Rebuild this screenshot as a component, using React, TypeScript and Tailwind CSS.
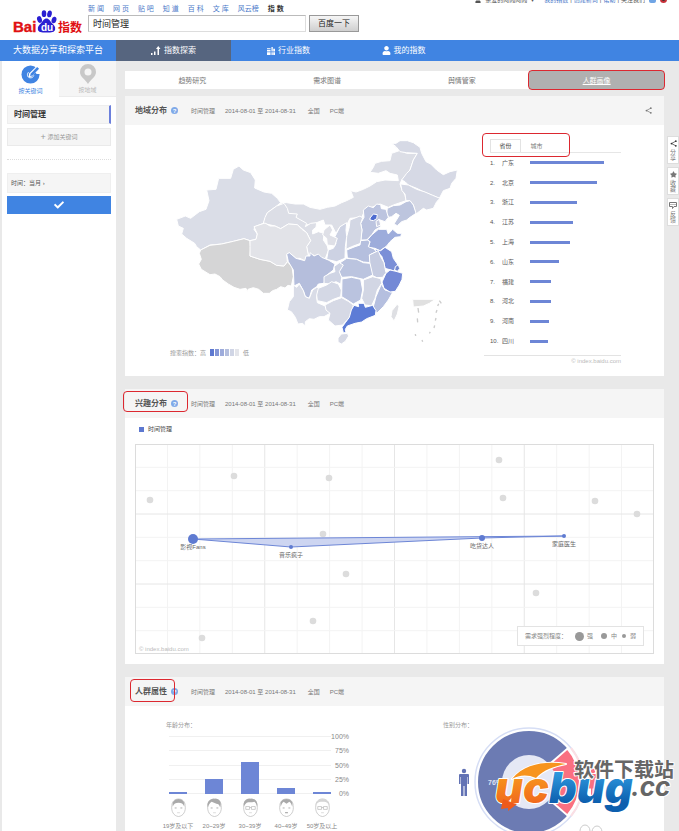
import { useState } from "react";
import clsx from "clsx";
import { FaCheck, FaStar, FaUser } from "react-icons/fa";

const searchLinks = ["新 闻", "网 页", "贴 吧", "知 道", "百 科", "文 库", "风云榜"];
const tabs = ["趋势研究", "需求图谱", "舆情管家", "人群画像"];

const provinces = [
  { name: "广东", value: 74 },
  { name: "北京", value: 67 },
  { name: "浙江", value: 47 },
  { name: "江苏", value: 43 },
  { name: "上海", value: 40 },
  { name: "山东", value: 29 },
  { name: "福建", value: 21 },
  { name: "河北", value: 21 },
  { name: "河南", value: 19 },
  { name: "四川", value: 18 },
];

const mapShapes = [
  // west and north
  { fill: "#dadde7", d: "M500,268 l26,-10 16,7 26,-20 20,-7 9,-26 -7,-32 28,-2 8,-33 36,0 8,-27 17,-10 13,12 22,8 14,22 -2,24 28,12 23,4 17,15 10,13 -12,10 -28,20 -12,32 -25,10 -3,8 10,14 -4,16 -18,4 -18,-6 -32,8 -35,8 -35,3 -28,15 -12,-10 -6,-10 -24,-15 -15,-13 5,-17 -15,-7Z", west: true },
  { fill: "#dcdee6", d: "M-88,218 L-70,218 -45,222 -20,222 0,232 30,238 52,232 75,228 95,218 110,212 130,202 122,182 138,186 160,178 180,168 200,155 225,150 265,152 262,135 240,130 228,122 205,130 180,127 190,112 195,100 215,94 240,92 245,70 268,62 262,50 245,42 270,62 290,70 322,70 310,90 298,125 275,150 270,162 276,180 285,195 288,212 250,225 235,232 210,222 165,240 155,262 120,265 110,285 90,290 78,310 65,285 45,285 40,270 15,280 -38,290Z" },
  { fill: "#dcdee6", d: "M-140,280 L-135,262 -128,248 -100,228 -78,220 -68,235 -64,250 -38,252 -42,262 -10,280 -14,290 2,280 20,278 18,292 8,300 8,312 25,305 42,310 40,330 52,348 55,362 45,388 30,392 10,375 -5,375 -10,350 2,332 -10,308 -38,284 -65,282 -88,296 -105,288Z" },
  { fill: "#d5d5d6", d: "M-328,360 L-300,346 -265,342 -230,334 -198,326 -180,332 -178,355 -180,378 -150,388 -120,394 -100,406 -78,408 -68,395 -54,410 -50,440 -56,468 -66,466 -75,474 -88,470 -100,478 -112,482 -122,490 -140,490 -154,478 -170,473 -186,478 -188,485 -192,475 -210,478 -228,472 -245,462 -262,450 -270,440 -285,432 -300,434 -326,418 -334,402 -326,388 -332,370Z" },
  { fill: "#e2e3e8", d: "M-168,290 L-150,284 -135,279 -120,288 -105,288 -88,296 -65,282 -38,284 -24,298 -10,308 2,332 -10,350 -5,375 -16,392 -30,385 -42,385 -62,368 -70,375 -68,395 -78,408 -100,406 -120,394 -150,388 -180,378 -180,350 -180,332 -162,328 -158,312Z" },
  { fill: "#b5bedc", d: "M-70,372 L-62,368 -42,385 -16,392 -12,378 0,378 0,368 12,378 25,372 35,382 55,390 75,402 70,420 50,436 42,460 25,462 20,470 5,480 -2,505 -14,500 -20,482 -32,460 -48,468 -50,420 -65,395Z" },
  { fill: "#d9dce7", d: "M-50,465 L-40,472 -32,462 -20,482 -14,500 -2,505 8,480 20,472 30,475 20,500 22,518 50,530 60,550 42,560 28,560 12,568 -2,566 -14,575 -14,588 -22,580 -36,582 -44,562 -56,545 -68,540 -62,515 -50,500Z" },
  // north-east
  { fill: "#d6d9e5", d: "M245,40 L258,40 270,32 292,32 310,38 330,52 335,70 348,95 362,102 380,120 400,134 420,125 442,120 438,145 425,160 420,175 400,182 388,205 365,195 340,185 320,175 295,165 285,155 275,150 290,130 300,120 310,90 322,70 290,68 270,65 258,50Z" },
  { fill: "#d6d9e5", d: "M272,162 L295,165 320,178 345,186 368,196 390,205 380,215 370,235 350,240 340,235 318,252 310,225 300,212 288,212 285,192 276,182Z" },
  { fill: "#bdc5de", d: "M232,235 L250,227 270,225 288,215 300,212 310,225 318,250 300,262 290,270 275,275 262,287 252,282 268,256 258,250 245,260 236,262 230,250Z" },
  { fill: "#bcc4df", d: "M160,240 L175,228 190,233 200,222 212,224 214,236 228,238 235,262 225,275 205,268 212,290 195,300 185,315 170,330 152,330 156,300 152,280 162,262Z" },
  { fill: "#c9cde0", d: "M198,274 L208,268 212,285 200,290Z" },
  { fill: "#4e6cd0", d: "M180,264 L190,252 202,254 200,266 190,272 180,270Z" },
  { fill: "#d3d7e4", d: "M120,270 L150,258 158,264 152,280 156,300 152,340 125,350 108,358 110,320 118,290Z" },
  { fill: "#cdd2e3", d: "M90,290 L110,278 108,300 110,320 106,350 105,385 80,395 50,388 55,360 70,355 78,340 72,325 80,310Z" },
  { fill: "#dfe0e7", d: "M42,300 L60,285 68,300 60,315 82,325 74,348 52,345 50,325 38,315Z" },
  // centre and coast
  { fill: "#9dacdb", d: "M185,315 L205,298 230,298 235,312 248,298 262,310 275,310 272,320 255,322 240,335 230,348 210,362 195,355 175,352 180,335 172,330Z" },
  { fill: "#b5bfde", d: "M110,360 L135,350 150,345 152,332 172,330 180,335 175,350 205,362 178,375 182,398 160,396 140,388 112,384Z" },
  { fill: "#7b8fd7", d: "M192,358 L212,362 225,352 245,365 250,385 262,402 265,412 250,422 225,415 222,398 215,378Z" },
  { fill: "#c6cce1", d: "M178,375 L205,362 212,380 222,398 225,415 228,428 218,442 200,443 185,435 180,410Z" },
  { fill: "#bbc4df", d: "M85,402 L110,385 140,388 160,398 180,400 188,435 160,448 125,440 98,442 82,430Z" },
  { fill: "#cfd4e4", d: "M42,440 L60,430 75,425 72,410 88,398 100,405 88,425 95,442 92,462 78,455 60,462 42,460Z" },
  { fill: "#d4d8e5", d: "M20,495 L25,475 50,465 65,455 85,462 94,480 92,500 70,508 50,518 22,512Z" },
  { fill: "#bac3df", d: "M96,447 L125,442 152,448 158,480 152,510 130,522 112,510 95,500Z" },
  { fill: "#d2d6e4", d: "M160,450 L188,440 212,446 215,460 202,480 195,505 185,527 165,525 155,505 160,480Z" },
  { fill: "#d6d9e5", d: "M45,525 L70,512 95,503 115,514 130,525 122,558 98,585 75,588 55,570 60,550 48,540Z" },
  { fill: "#b5bfdf", d: "M214,462 L225,480 248,487 235,510 220,530 200,550 190,530 198,500Z" },
  { fill: "#7489d6", d: "M228,430 L240,420 258,424 278,430 276,448 268,465 256,484 240,486 222,475 216,456Z" },
  { fill: "#7388cf", d: "M256,410 L265,404 269,416 262,424 254,420Z" },
  { fill: "#5d7cd6", d: "M144,520 L162,520 166,532 188,526 198,542 196,556 170,566 155,576 135,580 112,588 106,598 108,608 100,608 96,592 106,578 118,562 124,540 132,526 146,530Z" },
  { fill: "#d6d9e5", d: "M94,612 L112,610 116,618 106,634 94,642 84,636 84,624Z" },
  { fill: "#dedfe3", d: "M262,522 L267,530 262,552 252,573 243,560 246,542Z" },
  { fill: "#e0e0e0", d: "M308,508 L376,508 358,520 340,528 310,531Z" },
];

const greyDots = [
  [99, 32], [194, 34], [15, 56], [188, 90], [364, 16], [368, 54],
  [460, 57], [502, 70], [401, 149], [211, 130], [178, 177], [67, 194],
];

const interests = [
  { name: "影视Fans", x: 58, y: 95, r: 5 },
  { name: "音乐疯子", x: 156, y: 103, r: 2 },
  { name: "吃货达人", x: 347, y: 94, r: 3 },
  { name: "家庭医生", x: 429, y: 92, r: 2 },
];

const ages = [
  { label: "19岁及以下", height: 2 },
  { label: "20~29岁", height: 15 },
  { label: "30~39岁", height: 32 },
  { label: "40~49岁", height: 6 },
  { label: "50岁及以上", height: 2 },
];

const legendColors = ["bg-[#5d78d0]", "bg-[#8496d6]", "bg-[#9dabdb]", "bg-[#b5bfde]", "bg-[#d0d5e5]", "bg-[#e4e5ea]"];

function BaiduLogo() {
  return (
    <svg viewBox="0 0 72 26" className="w-[72px] h-[26px] shrink-0" aria-label="Baidu 指数">
      <g className="font-[family-name:'Liberation_Sans','Noto_Sans_CJK_SC',sans-serif] font-bold" fill="#e01012">
        <text x="1" y="23" fontSize="15" stroke="#e01012" strokeWidth=".4">Bai</text>
        <text x="46" y="23" fontSize="12">指数</text>
      </g>
      <g fill="#2a1fd2">
        <ellipse cx="27.500" cy="10.500" rx="2.400" ry="3.400" transform="rotate(-15 27.500 10.500)" />
        <ellipse cx="32" cy="4.700" rx="2.300" ry="3.400" />
        <ellipse cx="37.500" cy="4.900" rx="2.300" ry="3.400" transform="rotate(12 37.500 4.900)" />
        <ellipse cx="42" cy="11" rx="2.400" ry="3.300" transform="rotate(15 42 11)" />
        <path d="M34.500 9.500c2.600 0 3.600 2.700 5.300 4.500 2.200 2.200 3.900 3.700 3.300 6.400-.6 2.600-3.100 3.200-8.600 3.200s-8.100-.6-8.600-3.200c-.5-2.700 1.200-4.200 3.300-6.400 1.700-1.800 2.700-4.500 5.300-4.500z" />
      </g>
      <text x="29" y="21.500" fontSize="10" fontWeight="700" fill="#fff" fontFamily="Liberation Sans">du</text>
    </svg>
  );
}

function ShareIcon({ className }: { className?: string }) {
  return (
    <svg viewBox="0 0 12 12" className={className} fill="none" stroke="currentColor" strokeWidth="1.200">
      <path d="M10 2 2.500 6 10 10" />
      <g fill="currentColor" stroke="none">
        <circle cx="10" cy="2" r="1.500" />
        <circle cx="2.500" cy="6" r="1.500" />
        <circle cx="10" cy="10" r="1.500" />
      </g>
    </svg>
  );
}

function Face({ index }: { index: number }) {
  const hair = [
    "M4 9C3 4 6 1 10 1s7 3 6 8c-1-3-3-4-6-4S5 6 4 9z",
    "M3 10C1 4 6 0 10 1c5-1 8 3 6 9-1-3-2-4-4-4L7 4C5 5 4 7 3 10z",
    "M3 9C2 4 5 0 10 1c5-1 8 3 7 8-1-2-1-4-3-5-3 1-6 0-8 1-1 1-2 2-3 4z",
    "M4 9C3 4 5 1 10 1s7 3 6 8c-1-2-1-4-3-5l-3 2-3-2C5 5 5 7 4 9z",
    "M3 10C2 5 5 1 10 1s8 4 7 9c0-4-2-6-7-6s-7 2-7 6z",
  ][index];
  return (
    <svg viewBox="0 0 20 20" className="size-[19px]" fill="none" stroke="#b5b5b5" strokeWidth=".7">
      <path d="M3 8c-1 6 2 11 7 11.500C15 19 18 14 17 8c0-4-3-7-7-7S3 4 3 8z" />
      <path d={hair} fill={index === 4 ? "#d5d5d5" : "#aaa"} stroke="none" />
      {index === 2 || index === 4 ? (
        <path d="M5 9h4v3H5zM11 9h4v3h-4zM9 10h2" />
      ) : (
        <path d="M6 10.500h2M12 10.500h2" stroke="#888" />
      )}
      <path d="M8.500 15.500h3" stroke={index === 3 ? "#666" : "#ccc"} />
    </svg>
  );
}

function Callout({ className }: { className: string }) {
  return <span className={clsx("absolute border border-[#dc2830] rounded-[4px] pointer-events-none", className)} />;
}

function PanelHeader({ title, callout, share }: { title: string; callout?: string; share?: boolean }) {
  return (
    <header className="relative h-[29px] flex items-center pl-2.5 pr-3 bg-[#f5f5f5] text-[6px] text-[#777]">
      <h2 className="text-[8px] font-bold text-[#555]">{title}</h2>
      <span className="ml-1 size-[7px] rounded-full bg-[#7fa9e8] text-white text-[6px] font-bold flex items-center justify-center">
        ?
      </span>
      {callout && <Callout className={callout} />}
      <span className="ml-[13px]">时间管理</span>
      <span className="ml-2.5">2014-08-01 至 2014-08-31</span>
      <span className="ml-3">全国</span>
      <span className="ml-2.5">PC端</span>
      {share && (
        <button className="ml-auto text-[#777]" aria-label="分享">
          <ShareIcon className="size-[7px]" />
        </button>
      )}
    </header>
  );
}

function ChinaMap() {
  return (
    <svg viewBox="0 0 930 645" className="w-[310px] h-[215px]">
      <g transform="translate(450 0)" stroke="#fff" strokeWidth="3" strokeLinejoin="round">
        {mapShapes.map((shape) => (
          <path
            key={shape.d}
            d={shape.d}
            fill={shape.fill}
            transform={shape.west ? "translate(-900 0)" : undefined}
          />
        ))}
      </g>
      <path
        transform="translate(450 0)"
        d="M324,534l2,14M322,565l1,12M316,612l1,6M336,630l2,5M358,610l3,-4M372,594l2,-8M376,572l2,-8M378,548l3,-8M383,528l3,-7M388,512l6,8"
        stroke="#ccc"
        strokeWidth="4"
      />
    </svg>
  );
}

function RegionPanel() {
  return (
    <section className="bg-white">
      <PanelHeader title="地域分布" share />
      <div className="flex pt-[5px] pb-3 pl-[35px] pr-[43px]">
        <div>
          <ChinaMap />
          <div className="flex items-center gap-1 mt-1 ml-2.5 text-[6px] text-[#999]">
            搜索指数：高
            <span className="flex gap-px">
              {legendColors.map((color) => (
                <i key={color} className={clsx("w-1 h-[7px]", color)} />
              ))}
            </span>
            低
          </div>
        </div>
        <div className="relative flex-1 ml-[14px] pt-[9px]">
          <Callout className="left-[-2px] top-[3px] w-[88px] h-[24px]" />
          <div className="flex ml-1.5 border-b border-[#e6e6e6] text-[6px]">
            <button className="w-[31px] h-[13px] -mb-px border border-b-0 border-[#e3e3e3] bg-white text-[#444]">
              省份
            </button>
            <button className="w-[31px] h-[13px] text-[#777]">城市</button>
          </div>
          <ol className="flex flex-col h-[198px] text-[6px] text-[#555]">
            {provinces.map((item, i) => (
              <li key={item.name} className="flex flex-1 items-center pl-1.5">
                <span className="w-3">{i + 1}.</span>
                <span className="w-7">{item.name}</span>
                <span className="h-[3px] bg-[#6d86d6]" style={{ width: item.value }} />
              </li>
            ))}
          </ol>
          <p className="mt-1 pt-0.5 border-t border-[#e3e3e3] text-right text-[6px] text-[#bbb]">
            © index.baidu.com
          </p>
        </div>
      </div>
    </section>
  );
}

function InterestPanel() {
  const line = interests.map((p) => `${p.x},${p.y}`).join(" ");
  return (
    <section className="bg-white">
      <PanelHeader title="兴趣分布" callout="left-[-2px] top-[2px] w-[65px] h-[21px]" />
      <div className="px-2.5 pb-2.5">
        <p className="flex items-center gap-1 h-[26px] pb-1 pl-1 text-[6px] text-[#444]">
          <i className="size-[5px] bg-[#5d78d0]" />
          时间管理
        </p>
        <div className="relative">
          <svg viewBox="0 0 519 210" className="block w-full h-auto">
            {Array.from({ length: 15 }, (_, i) => (
              <path key={i} d={`M${((i + 1) * 519) / 16} 0v210`} stroke={i % 4 === 3 ? "#e6e6e6" : "#f3f3f3"} />
            ))}
            {Array.from({ length: 8 }, (_, i) => (
              <path key={i} d={`M0 ${((i + 1) * 210) / 9}h519`} stroke={i % 3 === 2 ? "#e6e6e6" : "#f3f3f3"} />
            ))}
            <rect x=".5" y=".5" width="518" height="209" fill="none" stroke="#dcdcdc" />
            {greyDots.map(([x, y]) => (
              <circle key={`${x}-${y}`} cx={x} cy={y} r="3.300" fill="#dcdcdc" />
            ))}
            <polygon points={line} fill="#cdd5f1" stroke="#6d86d6" strokeWidth="1" />
            {interests.map((p) => (
              <g key={p.name}>
                <circle cx={p.x} cy={p.y} r={p.r} fill="#5f7bd1" />
                <text x={p.x} y={p.y + 10} fontSize="6" textAnchor="middle" fill="#666">
                  {p.name}
                </text>
              </g>
            ))}
            <text x="4" y="207" fontSize="6" fill="#bbb">© index.baidu.com</text>
          </svg>
          <div className="absolute right-2.5 bottom-2 h-5 px-[7px] flex items-center border border-[#e3e3e3] bg-white text-[6px] text-[#888]">
            需求强烈程度：
            <i className="ml-2 mr-[3px] size-[9px] rounded-full bg-[#999]" />强
            <i className="ml-2 mr-1 size-[6px] rounded-full bg-[#999]" />中
            <i className="ml-[5px] mr-1 size-1 rounded-full bg-[#999]" />弱
          </div>
        </div>
      </div>
    </section>
  );
}

function AgeChart() {
  return (
    <div className="ml-[35px]">
      <h3 className="ml-1.5 text-[6px] text-[#999]">年龄分布：</h3>
      <div className="flex mt-2 ml-[9px]">
        <div className="relative w-[162px] h-[58px]">
          <div className="flex flex-col justify-between h-full">
            {[0, 1, 2, 3, 4].map((i) => (
              <i key={i} className="h-px bg-[#f0f0f0]" />
            ))}
          </div>
          <div className="absolute inset-0 flex items-end justify-between">
            {ages.map((age) => (
              <i key={age.label} className="w-[18px] bg-[#6d86d6]" style={{ height: age.height }} />
            ))}
          </div>
        </div>
        <div className="flex flex-col justify-between w-[18px] -my-[3px] text-right text-[7px] text-[#888]">
          {["100%", "75%", "50%", "25%", "0%"].map((label) => (
            <span key={label}>{label}</span>
          ))}
        </div>
      </div>
      <div className="flex w-[180px] mt-1 text-[6px] text-[#888]">
        {ages.map((age, i) => (
          <div key={age.label} className="flex flex-1 flex-col items-center gap-1.5 whitespace-nowrap">
            <Face index={i} />
            {age.label}
          </div>
        ))}
      </div>
    </div>
  );
}

function GenderChart() {
  return (
    <div className="ml-[94px]">
      <h3 className="text-[6px] text-[#999]">性别分布：</h3>
      <svg viewBox="0 0 180 112" className="w-[180px] h-[112px] overflow-visible">
        <circle cx="86" cy="54" r="54" fill="none" stroke="#d6def5" strokeWidth="1.500" />
        <path d="M128 20A54 54 0 0 1 128 88" fill="none" stroke="#fbdfe4" strokeWidth="2" />
        <circle cx="86" cy="54" r="38.500" fill="none" stroke="#6c7bb3" strokeWidth="25" />
        <path d="M86 54 124.500 20.600A51 51 0 0 1 124.500 87.400z" fill="#fa7081" stroke="#fff" strokeWidth="2" />
        <circle cx="86" cy="54" r="27" fill="#e5e8f5" />
        <text x="45" y="57" fontSize="7" fontWeight="700" fill="#dfe3f3">76%</text>
        <g fill="#6272b4">
          <circle cx="21" cy="43" r="2.200" />
          <path d="M17 46h8q1 0 1 1v9h-1.500v-7h-.5v19h-2.500v-10h-1v10H18V49h-.5v7H16v-9q0-1 1-1z" />
        </g>
        <g fill="#fa7081">
          <circle cx="150" cy="43" r="2.200" />
          <path d="M147 46h6l3 9-1.500.5-2-6 2 11H152v8h-1.500v-8h-1v8H148v-8h-2.500l2-11-2 6L144 55z" />
        </g>
        <g fill="none" stroke="#ccc">
          <ellipse cx="142" cy="103" rx="5" ry="6" />
          <ellipse cx="154" cy="104" rx="5" ry="6" />
        </g>
      </svg>
    </div>
  );
}

function Watermark() {
  return (
    <svg viewBox="0 0 186 56" className="absolute right-0 bottom-[15px] w-[186px] h-[56px] pointer-events-none">
      <defs>
        <linearGradient id="orange" x1="0" y1="0" x2="0" y2="1">
          <stop offset=".3" stopColor="#f7941e" />
          <stop offset="1" stopColor="#ee5a1c" />
        </linearGradient>
        <linearGradient id="blue" x1="0" y1="0" x2="0" y2="1">
          <stop offset=".2" stopColor="#2f9be0" />
          <stop offset=".8" stopColor="#0d5fae" />
        </linearGradient>
      </defs>
      <g stroke="#fff" strokeWidth="2" paintOrder="stroke" strokeLinejoin="round">
        <path d="M19 19C32 3 54 1 73 4 62 6 50 10 43 18 34 14 26 15 19 19z" fill="#f7941e" />
        <g className="font-[family-name:Inter,sans-serif] italic font-black">
          <text x="2" y="43" fontSize="43" fill="url(#orange)">uc</text>
          <text x="56" y="43" fontSize="43" fill="url(#blue)">bug</text>
        </g>
        <path d="M10 39l10 4 4 1-9 7 0-3-7 1z" fill="#ee5a1c" stroke="none" />
        <text x="138" y="36" fontSize="26" fill="#666" className="font-[family-name:Inter,sans-serif] italic font-bold">.cc</text>
        <text x="81" y="17" fontSize="20" fill="#666" className="font-[family-name:'Noto_Sans_CJK_SC',sans-serif] font-bold">软件下载站</text>
      </g>
    </svg>
  );
}

function Sidebar() {
  return (
    <aside className="w-[114px] ml-0.5 shrink-0 bg-white text-[6px]">
      <div className="flex h-9 mb-2">
        <button className="flex-1 flex flex-col items-center pt-1 gap-1 text-[#4084e2]">
          <svg viewBox="0 0 20 20" className="size-[19px]">
            <circle cx="10" cy="10" r="9.500" fill="#4084e2" />
            <path d="M20 0v9.500h-3.500L15 8l-3.500 4-3.500 1 .5-4L15 2.500 16 0z" fill="#fff" />
            <path d="m9.500 11.500.8-2.500L17 2l2 2-6.800 7z" fill="#4084e2" />
            <path d="M8 7.500c-2 2-1.500 5.500 1.500 6 2 .3 3.500-1 4-2.500" fill="none" stroke="#fff" strokeWidth="1" />
          </svg>
          按关键词
        </button>
        <button className="flex-1 flex flex-col items-center pt-[3px] gap-[3px] bg-[#f5f5f5] border-b border-[#ececec] text-[#bbb]">
          <svg viewBox="0 0 18 20" className="w-[18px] h-[20px]">
            <path d="M9 0a8 8 0 0 1 8 8c0 5-5 7-8 12C6 15 1 13 1 8a8 8 0 0 1 8-8z" fill="#c8c8c8" />
            <circle cx="9" cy="8" r="3.500" fill="#f5f5f5" />
          </svg>
          按地域
        </button>
      </div>
      <div className="px-[5px]">
        <div className="h-[19px] flex items-center pl-1.5 bg-[#f5f5f5] border border-r-2 border-[#eee] border-r-[#6c80dc] text-[8px] font-bold text-[#333]">
          时间管理
        </div>
        <button className="w-full h-[18px] mt-1 bg-[#f5f5f5] border border-[#eaeaea] text-[#999]">
          <span className="text-[9px] align-middle">+</span> 添加关键词
        </button>
        <hr className="mt-[13px] mb-[13px] border-dotted border-[#ddd]" />
        <button className="w-full h-5 px-[3px] bg-[#f5f5f5] border border-[#efefef] text-left text-[#555]">
          时间：当月 ›
        </button>
        <button className="w-full h-[18px] mt-[3px] flex items-center justify-center bg-[#4084e2] text-white" aria-label="确定">
          <FaCheck className="size-[10px]" />
        </button>
      </div>
    </aside>
  );
}

function SideTools() {
  const tools = [
    { label: "分享", icon: <ShareIcon className="size-[7px] text-[#333]" /> },
    { label: "收藏", icon: <FaStar className="size-[7px]" /> },
    {
      label: "反馈",
      icon: (
        <svg viewBox="0 0 16 14" className="w-2 h-[7px]" fill="none" stroke="currentColor" strokeWidth="2">
          <path d="M1 1h14v8h-5l-3 4V9H1zM3 5h2M7 5h2M11 5h2" />
        </svg>
      ),
    },
  ];
  return (
    <div className="absolute right-0 top-[75px] flex flex-col gap-[3px]">
      {tools.map((tool) => (
        <button
          key={tool.label}
          className="w-[12px] h-[28px] flex flex-col items-center justify-center gap-0.5 bg-white border border-[#ddd] text-[6px] text-[#777]"
        >
          {tool.icon}
          <span className="w-[6px]">{tool.label}</span>
        </button>
      ))}
    </div>
  );
}

export default function App() {
  const [keyword, setKeyword] = useState("时间管理");

  return (
    <div className="relative h-screen overflow-hidden bg-[#e9e9e9] leading-none font-[family-name:'Liberation_Sans','Noto_Sans_CJK_SC',sans-serif]">
      <header className="relative h-10 flex pl-3 bg-white">
        <div className="pt-[9px]">
          <BaiduLogo />
        </div>
        <div className="pt-[5px] ml-1">
          <nav className="flex gap-[9px] text-[7px] text-[#4a79c9]">
            {searchLinks.map((link) => (
              <a key={link} href="#">{link}</a>
            ))}
            <span className="font-bold text-[#333]">指 数</span>
          </nav>
          <form className="flex gap-[3px] mt-[3px]">
            <input
              aria-label="搜索"
              className="w-[218px] h-[17px] px-1 border border-[#bbb] border-r-[#ddd] border-b-[#ddd] text-[9px] text-[#222]"
              value={keyword}
              onChange={(e) => setKeyword(e.target.value)}
            />
            <button
              type="button"
              className="w-[50px] h-[17px] border border-[#999] bg-linear-to-b from-[#f6f6f6] to-[#cfcfcf] text-[8px] text-[#222]"
            >
              百度一下
            </button>
          </form>
        </div>
        <div className="absolute right-3 -top-1 flex items-center text-[6px] text-[#555]">
          <FaUser className="size-[6px] mr-1" />
          亲爱的阿闻阿闻
          <span className="ml-1 mr-2.5">▾</span>
          <a href="#" className="text-[#4a79c9]">我的指数</a>
          <span className="mx-0.5">|</span>
          <a href="#" className="text-[#4a79c9]">创建新词</a>
          <span className="mx-0.5">|</span>
          <a href="#" className="text-[#4a79c9]">帮助</a>
          <span className="mx-0.5">|</span>
          关注我们
          <i className="ml-1 size-[7px] rounded-xs bg-[#70a5e5]" />
          <i className="ml-1 size-[7px] rounded-full border-2 border-[#c7313a] bg-[#333]" />
        </div>
      </header>

      <nav className="flex h-[21px] bg-[#4084e2] text-[8px] text-white">
        <strong className="w-[116px] flex items-center justify-center font-normal text-[9px] font-[family-name:'Liberation_Serif','Noto_Sans_CJK_SC',serif]">
          大数据分享和探索平台
        </strong>
        <a href="#" className="w-[115px] flex items-center justify-center gap-[3px] bg-[#56657f]">
          <svg viewBox="0 0 10 10" className="size-[10px]" fill="currentColor">
            <path d="M0 7h1.500v2H0zM3 5.500h1.500V9H3zM6.500 3v6H8V3h1.500L7.250 0 5 3z" />
          </svg>
          指数探索
        </a>
        <a href="#" className="w-[115px] flex items-center justify-center gap-[3px]">
          <svg viewBox="0 0 9 9" className="size-2" fill="currentColor">
            <path d="M0 1h4v1H0zM0 3h4v2H0zM0 6h4v3H0zM5 0h1.500v5H5zM7 2h2v3H7zM5 6h1.500v3H5zM7 6h2v3H7z" />
          </svg>
          行业指数
        </a>
        <a href="#" className="w-[115px] flex items-center justify-center gap-[3px]">
          <FaUser className="size-[9px]" />
          我的指数
        </a>
      </nav>

      <div className="relative flex items-stretch min-h-full">
        <Sidebar />
        <main className="flex-1 pt-2.5 pl-[9px] pr-[15px]">
          <nav className="grid grid-cols-4 h-[18px] mb-[7px] bg-white text-[7px] text-[#777]">
            {tabs.map((tab, i) => (
              <a
                key={tab}
                href="#"
                className={clsx(
                  "relative flex items-center justify-center",
                  i === 3 && "bg-[#b0b0b0] text-white underline"
                )}
              >
                {tab}
                {i === 3 && <Callout className="-inset-px" />}
              </a>
            ))}
          </nav>
          <div className="flex flex-col gap-[13px]">
            <RegionPanel />
            <InterestPanel />
            <section className="bg-white">
              <PanelHeader title="人群属性" callout="left-[5px] top-[2px] w-[45px] h-[23px]" />
              <div className="flex pt-4 h-[160px]">
                <AgeChart />
                <GenderChart />
              </div>
            </section>
          </div>
        </main>
        <SideTools />
      </div>
      <Watermark />
    </div>
  );
}
